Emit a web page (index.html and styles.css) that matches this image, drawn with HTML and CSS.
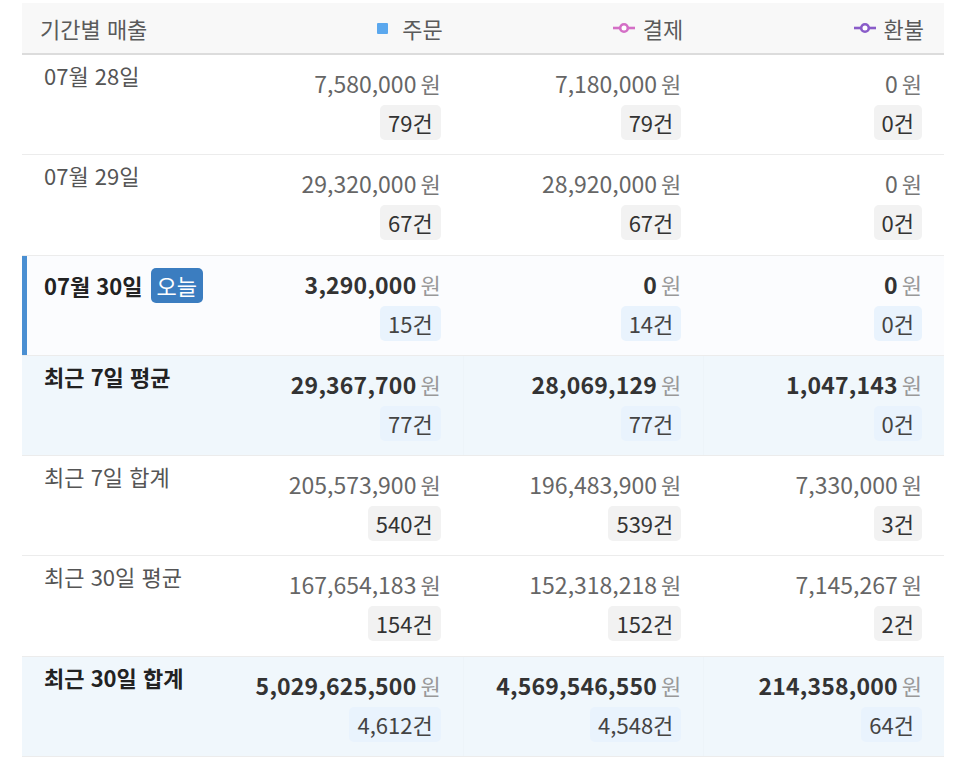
FILE: index.html
```html
<!DOCTYPE html>
<html lang="ko">
<head>
<meta charset="utf-8">
<link rel="stylesheet" href="styles.css">
</head>
<body>
<div class="wrap">
  <div class="table">
    <div class="row head">
      <div class="cell label-cell"><span class="htext">기간별 매출</span></div>
      <div class="cell hcell"><span class="sq"></span><span class="htext">주문</span></div>
      <div class="cell hcell">
        <svg class="lineicon" width="22" height="12" viewBox="0 0 22 12"><line x1="0" y1="6" x2="22" y2="6" stroke="#d46fc6" stroke-width="2.6"/><circle cx="11" cy="6" r="3.8" fill="#fff" stroke="#d46fc6" stroke-width="2.6"/></svg>
        <span class="htext">결제</span></div>
      <div class="cell hcell">
        <svg class="lineicon" width="22" height="12" viewBox="0 0 22 12"><line x1="0" y1="6" x2="22" y2="6" stroke="#8a5cc9" stroke-width="2.6"/><circle cx="11" cy="6" r="3.8" fill="#fff" stroke="#8a5cc9" stroke-width="2.6"/></svg>
        <span class="htext">환불</span></div>
    </div>

    <div class="row">
      <div class="cell label-cell"><span class="label">07월 28일</span></div>
      <div class="cell vcell"><div class="amt"><span class="num">7,580,000</span><span class="won">원</span></div><span class="cnt">79건</span></div>
      <div class="cell vcell"><div class="amt"><span class="num">7,180,000</span><span class="won">원</span></div><span class="cnt">79건</span></div>
      <div class="cell vcell"><div class="amt"><span class="num">0</span><span class="won">원</span></div><span class="cnt">0건</span></div>
    </div>

    <div class="row">
      <div class="cell label-cell"><span class="label">07월 29일</span></div>
      <div class="cell vcell"><div class="amt"><span class="num">29,320,000</span><span class="won">원</span></div><span class="cnt">67건</span></div>
      <div class="cell vcell"><div class="amt"><span class="num">28,920,000</span><span class="won">원</span></div><span class="cnt">67건</span></div>
      <div class="cell vcell"><div class="amt"><span class="num">0</span><span class="won">원</span></div><span class="cnt">0건</span></div>
    </div>

    <div class="row today strong">
      <div class="cell label-cell"><span class="label">07월 30일</span><span class="today-badge">오늘</span></div>
      <div class="cell vcell"><div class="amt"><span class="num">3,290,000</span><span class="won">원</span></div><span class="cnt">15건</span></div>
      <div class="cell vcell"><div class="amt"><span class="num">0</span><span class="won">원</span></div><span class="cnt">14건</span></div>
      <div class="cell vcell"><div class="amt"><span class="num">0</span><span class="won">원</span></div><span class="cnt">0건</span></div>
    </div>

    <div class="row avg strong">
      <div class="cell label-cell"><span class="label">최근 7일 평균</span></div>
      <div class="cell vcell"><div class="amt"><span class="num">29,367,700</span><span class="won">원</span></div><span class="cnt">77건</span></div>
      <div class="cell vcell"><div class="amt"><span class="num">28,069,129</span><span class="won">원</span></div><span class="cnt">77건</span></div>
      <div class="cell vcell"><div class="amt"><span class="num">1,047,143</span><span class="won">원</span></div><span class="cnt">0건</span></div>
    </div>

    <div class="row">
      <div class="cell label-cell"><span class="label">최근 7일 합계</span></div>
      <div class="cell vcell"><div class="amt"><span class="num">205,573,900</span><span class="won">원</span></div><span class="cnt">540건</span></div>
      <div class="cell vcell"><div class="amt"><span class="num">196,483,900</span><span class="won">원</span></div><span class="cnt">539건</span></div>
      <div class="cell vcell"><div class="amt"><span class="num">7,330,000</span><span class="won">원</span></div><span class="cnt">3건</span></div>
    </div>

    <div class="row">
      <div class="cell label-cell"><span class="label">최근 30일 평균</span></div>
      <div class="cell vcell"><div class="amt"><span class="num">167,654,183</span><span class="won">원</span></div><span class="cnt">154건</span></div>
      <div class="cell vcell"><div class="amt"><span class="num">152,318,218</span><span class="won">원</span></div><span class="cnt">152건</span></div>
      <div class="cell vcell"><div class="amt"><span class="num">7,145,267</span><span class="won">원</span></div><span class="cnt">2건</span></div>
    </div>

    <div class="row avg strong">
      <div class="cell label-cell"><span class="label">최근 30일 합계</span></div>
      <div class="cell vcell"><div class="amt"><span class="num">5,029,625,500</span><span class="won">원</span></div><span class="cnt">4,612건</span></div>
      <div class="cell vcell"><div class="amt"><span class="num">4,569,546,550</span><span class="won">원</span></div><span class="cnt">4,548건</span></div>
      <div class="cell vcell"><div class="amt"><span class="num">214,358,000</span><span class="won">원</span></div><span class="cnt">64건</span></div>
    </div>
  </div>
</div>
</body>
</html>
```

FILE: styles.css
```css
* { box-sizing: border-box; }
html, body { margin: 0; padding: 0; background: #fff; }
body {
  font-family: "Noto Sans CJK KR", "Noto Sans", sans-serif;
  color: #333;
}
.wrap { padding: 3px 22px 0 22px; }
.table { width: 922px; }
.row {
  display: grid;
  grid-template-columns: 200px 1fr 1fr 1fr;
  border-bottom: 1px solid #ececec;
  height: 100.3px;
}
.row.head {
  height: 52px;
  background: #f8f8f8;
  border-bottom: 2px solid #dcdcdc;
  align-items: center;
}
.htext { font-size: 22px; color: #5a5a5a; line-height: 28px; }
.head .label-cell { padding: 0 0 0 18px; display: flex; align-items: center; }
.hcell {
  display: flex;
  justify-content: flex-end;
  align-items: center;
  gap: 8px;
  padding-right: 20px;
}
.sq { width: 11px; height: 11px; background: #5ba8ee; border-radius: 1px; margin-right: 6px; }
.lineicon { display: block; }

.label-cell {
  padding: 12px 0 0 22px;
  display: flex;
  align-items: flex-start;
  gap: 8px;
}
.label-cell .label { font-size: 22px; line-height: 16px; color: #555; white-space: nowrap; }
.today .label-cell { align-items: center; align-self: start; }
.today .label-cell .label { line-height: 35px; }
.today-badge {
  display: inline-block;
  height: 35px;
  line-height: 35px;
  padding: 0 6px;
  background: #3b7dc0;
  color: #fff;
  font-size: 22px;
  border-radius: 5px;
}

.vcell {
  padding: 13px 22px 0 0;
  display: flex;
  flex-direction: column;
  align-items: flex-end;
}
.amt { font-size: 23px; line-height: 30px; color: #666; white-space: nowrap; }
.won { color: #777; margin-left: 4px; font-size: 22px; }
.cnt {
  margin-top: 7px;
  display: inline-block;
  height: 35px;
  line-height: 35px;
  padding: 0 8px;
  font-size: 22px;
  color: #333;
  background: #f2f2f2;
  border-radius: 5px;
  white-space: nowrap;
}

.strong .label-cell .label { font-weight: 700; color: #222; }
.strong .num { font-weight: 700; color: #333; letter-spacing: 0.2px; }
.strong .won { color: #999; }
.strong .cnt { background: #e9f3fd; color: #444; }

.today {
  background: #fbfcfe;
  box-shadow: inset 5px 0 0 #4a8fd2;
}
.avg { background: #f0f7fc; }
.avg .vcell + .vcell { border-left: 1px solid rgba(0, 0, 0, 0.012); }
```
